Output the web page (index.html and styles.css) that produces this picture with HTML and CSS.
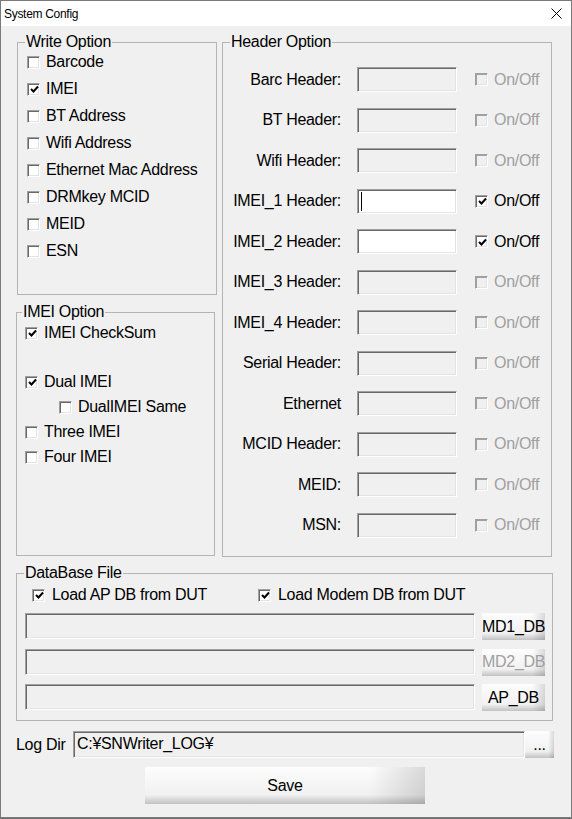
FILE: index.html
```html
<!DOCTYPE html>
<html lang="en">
  <head>
    <meta charset="UTF-8" />
    <title>System Config</title>
    <link rel="stylesheet" href="styles.css">
  </head>
  <body>
    <div class="window">
      <div class="titlebar">
        <span class="title">System Config</span>
        <svg class="close" width="11" height="11" viewBox="0 0 11 11">
          <path d="M0.5 0.5 L10.5 10.5 M10.5 0.5 L0.5 10.5" stroke="#000" stroke-width="1" fill="none" />
        </svg>
      </div>

      <div class="dialog">
        <div class="top">
          <div class="left-col">
            <!-- 写入选项 -->
            <fieldset class="group write">
              <legend>Write Option</legend>
              <div class="list">
                <label class="chk"><span class="cb"></span>Barcode</label>
                <label class="chk"><span class="cb on"><svg width="9" height="9" viewBox="0 0 9 9"><path d="M1 4 L3.5 6.5 L8 1.5" stroke="#000" stroke-width="2" fill="none" /></svg></span>IMEI</label>
                <label class="chk"><span class="cb"></span>BT Address</label>
                <label class="chk"><span class="cb"></span>Wifi Address</label>
                <label class="chk"><span class="cb"></span>Ethernet Mac Address</label>
                <label class="chk"><span class="cb"></span>DRMkey MCID</label>
                <label class="chk"><span class="cb"></span>MEID</label>
                <label class="chk"><span class="cb"></span>ESN</label>
              </div>
            </fieldset>

            <fieldset class="group imei">
              <legend>IMEI Option</legend>
              <div class="list">
                <label class="chk spaced"><span class="cb on"><svg width="9" height="9" viewBox="0 0 9 9"><path d="M1 4 L3.5 6.5 L8 1.5" stroke="#000" stroke-width="2" fill="none" /></svg></span>IMEI CheckSum</label>
                <label class="chk"><span class="cb on"><svg width="9" height="9" viewBox="0 0 9 9"><path d="M1 4 L3.5 6.5 L8 1.5" stroke="#000" stroke-width="2" fill="none" /></svg></span>Dual IMEI</label>
                <label class="chk sub"><span class="cb"></span>DualIMEI Same</label>
                <label class="chk"><span class="cb"></span>Three IMEI</label>
                <label class="chk"><span class="cb"></span>Four IMEI</label>
              </div>
            </fieldset>
          </div>

          <!-- 前缀设置 -->
          <fieldset class="group header">
            <legend>Header Option</legend>
            <div class="hgrid">
              <span class="hlabel">Barc Header:</span>
              <div class="edit"></div>
              <label class="chk off"><span class="cb"></span>On/Off</label>

              <span class="hlabel">BT Header:</span>
              <div class="edit"></div>
              <label class="chk off"><span class="cb"></span>On/Off</label>

              <span class="hlabel">Wifi Header:</span>
              <div class="edit"></div>
              <label class="chk off"><span class="cb"></span>On/Off</label>

              <span class="hlabel">IMEI_1 Header:</span>
              <div class="edit live"><span class="caret"></span></div>
              <label class="chk"><span class="cb on"><svg width="9" height="9" viewBox="0 0 9 9"><path d="M1 4 L3.5 6.5 L8 1.5" stroke="#000" stroke-width="2" fill="none" /></svg></span>On/Off</label>

              <span class="hlabel">IMEI_2 Header:</span>
              <div class="edit live"></div>
              <label class="chk"><span class="cb on"><svg width="9" height="9" viewBox="0 0 9 9"><path d="M1 4 L3.5 6.5 L8 1.5" stroke="#000" stroke-width="2" fill="none" /></svg></span>On/Off</label>

              <span class="hlabel">IMEI_3 Header:</span>
              <div class="edit"></div>
              <label class="chk off"><span class="cb"></span>On/Off</label>

              <span class="hlabel">IMEI_4 Header:</span>
              <div class="edit"></div>
              <label class="chk off"><span class="cb"></span>On/Off</label>

              <span class="hlabel">Serial Header:</span>
              <div class="edit"></div>
              <label class="chk off"><span class="cb"></span>On/Off</label>

              <span class="hlabel">Ethernet</span>
              <div class="edit"></div>
              <label class="chk off"><span class="cb"></span>On/Off</label>

              <span class="hlabel">MCID Header:</span>
              <div class="edit"></div>
              <label class="chk off"><span class="cb"></span>On/Off</label>

              <span class="hlabel">MEID:</span>
              <div class="edit"></div>
              <label class="chk off"><span class="cb"></span>On/Off</label>

              <span class="hlabel">MSN:</span>
              <div class="edit"></div>
              <label class="chk off"><span class="cb"></span>On/Off</label>
            </div>
          </fieldset>
        </div>

        <!-- 数据库文件 -->
        <fieldset class="group db">
          <legend>DataBase File</legend>
          <div class="dbchecks">
            <label class="chk first"><span class="cb on"><svg width="9" height="9" viewBox="0 0 9 9"><path d="M1 4 L3.5 6.5 L8 1.5" stroke="#000" stroke-width="2" fill="none" /></svg></span>Load AP DB from DUT</label>
            <label class="chk"><span class="cb on"><svg width="9" height="9" viewBox="0 0 9 9"><path d="M1 4 L3.5 6.5 L8 1.5" stroke="#000" stroke-width="2" fill="none" /></svg></span>Load Modem DB from DUT</label>
          </div>
          <div class="dbrows">
            <div class="dbrow">
              <div class="edit path"></div>
              <button class="btn small">MD1_DB</button>
            </div>
            <div class="dbrow">
              <div class="edit path"></div>
              <button class="btn small disabled">MD2_DB</button>
            </div>
            <div class="dbrow">
              <div class="edit path"></div>
              <button class="btn small">AP_DB</button>
            </div>
          </div>
        </fieldset>

        <div class="logrow">
          <span class="loglabel">Log Dir</span>
          <div class="edit logpath">C:¥SNWriter_LOG¥</div>
          <button class="btn dots">...</button>
        </div>

        <button class="btn save">Save</button>
      </div>
    </div>
  </body>
</html>
```

FILE: styles.css
```css
* {
  margin: 0;
  padding: 0;
  box-sizing: border-box;
}

body {
  background-color: #6f6f6f;
  font: 16px "Liberation Sans", Arial, sans-serif;
  letter-spacing: -0.3px;
  color: #000;
}

.window {
  width: 572px;
  height: 818px;
  border: 1px solid #7a7a7a;
  background-color: #f0f0f0;
}

.titlebar {
  height: 25px;
  background-color: #fff;
  display: flex;
  align-items: center;
  justify-content: space-between;
  padding: 0 9px 0 3px;
}

.title {
  font-size: 12px;
  letter-spacing: -0.3px;
}

.dialog {
  padding: 7px 17px 0 15px;
}

.top {
  display: flex;
  gap: 5px;
}

.left-col {
  width: 201px;
  display: flex;
  flex-direction: column;
  gap: 8px;
}

/* 分组框 */
.group {
  border: 1px solid #b4b4b4;
  padding: 0;
  min-width: 0;
}

.group legend {
  line-height: 18px;
  padding: 0 1px;
  margin-left: 7px;
}

.write {
  width: 200px;
  height: 262px;
  margin-left: 1px;
}

.imei {
  width: 199px;
  height: 253px;
}

.imei legend {
  margin-left: 5px;
}

.header {
  width: 330px;
  height: 524px;
}

.list {
  display: flex;
  flex-direction: column;
}

.write .list {
  gap: 5px;
  padding-left: 9px;
}

.imei .list {
  gap: 3px;
  padding: 1px 0 0 8px;
}

.chk {
  height: 22px;
  display: flex;
  align-items: center;
  white-space: nowrap;
}

.chk.spaced {
  margin-bottom: 24px;
}

.chk.sub {
  padding-left: 34px;
}

/* 复选框 */
.cb {
  width: 13px;
  height: 13px;
  margin-right: 6px;
  flex-shrink: 0;
  background-color: #fff;
  border: 1px solid;
  border-color: #a0a0a0 #fff #fff #a0a0a0;
  box-shadow: inset 1px 1px 0 #696969, inset -1px -1px 0 #e3e3e3;
  display: flex;
  align-items: center;
  justify-content: center;
}

.cb svg {
  margin: 1px 0 0 1px;
}

.chk.off {
  color: #a0a0a0;
}

.chk.off .cb {
  background-color: #f0f0f0;
  box-shadow: inset 1px 1px 0 #a0a0a0, inset -1px -1px 0 #e3e3e3;
}

.hgrid {
  display: grid;
  grid-template-columns: 118px 100px 1fr;
  grid-auto-rows: 25px;
  column-gap: 16px;
  row-gap: 15.5px;
  padding-top: 16px;
  align-items: center;
}

.hlabel {
  text-align: right;
  white-space: nowrap;
}

.hgrid .chk {
  margin-left: 2px;
}

/* 输入框 */
.edit {
  height: 25px;
  background-color: #f0f0f0;
  border: 1px solid;
  border-color: #a0a0a0 #fff #fff #a0a0a0;
  box-shadow: inset 1px 1px 0 #696969, inset -1px -1px 0 #e3e3e3;
}

.edit.live {
  background-color: #fff;
}

.caret {
  display: block;
  width: 1px;
  height: 19px;
  margin: 2px 0 0 3px;
  background-color: #000;
}

.db {
  width: 537px;
  height: 157px;
  margin-top: 7px;
}

.dbchecks {
  display: flex;
  padding: 2px 0 0 15px;
}

.dbchecks .cb {
  margin-right: 7px;
}

.dbchecks .first {
  width: 226px;
}

.dbrows {
  display: flex;
  flex-direction: column;
  gap: 8.5px;
  margin-top: 7px;
  padding-left: 8px;
}

.dbrow {
  display: flex;
  gap: 7px;
  height: 27px;
}

.edit.path {
  width: 450px;
  height: 26px;
}

/* 按钮 */
.btn {
  border: none;
  font: 16px "Liberation Sans", Arial, sans-serif;
  letter-spacing: -0.3px;
  color: #000;
  background: linear-gradient(to right, rgba(255, 255, 255, 0) 80%, rgba(0, 0, 0, 0.14)),
    linear-gradient(#fdfdfd, #f1f1f1 75%, #c2c2c2);
}

.btn.small {
  width: 63px;
  height: 27px;
}

.btn.disabled {
  color: #a0a0a0;
}

.logrow {
  display: flex;
  align-items: center;
  margin-top: 10px;
}

.loglabel {
  width: 57px;
  flex-shrink: 0;
}

.edit.logpath {
  width: 452px;
  height: 27px;
  flex-shrink: 0;
  padding: 2px 0 0 3px;
  line-height: 20px;
}

.btn.dots {
  width: 29px;
  height: 27px;
  flex-shrink: 0;
  line-height: 27px;
}

.btn.save {
  display: block;
  width: 280px;
  height: 37px;
  margin: 9px auto 0;
}
```
